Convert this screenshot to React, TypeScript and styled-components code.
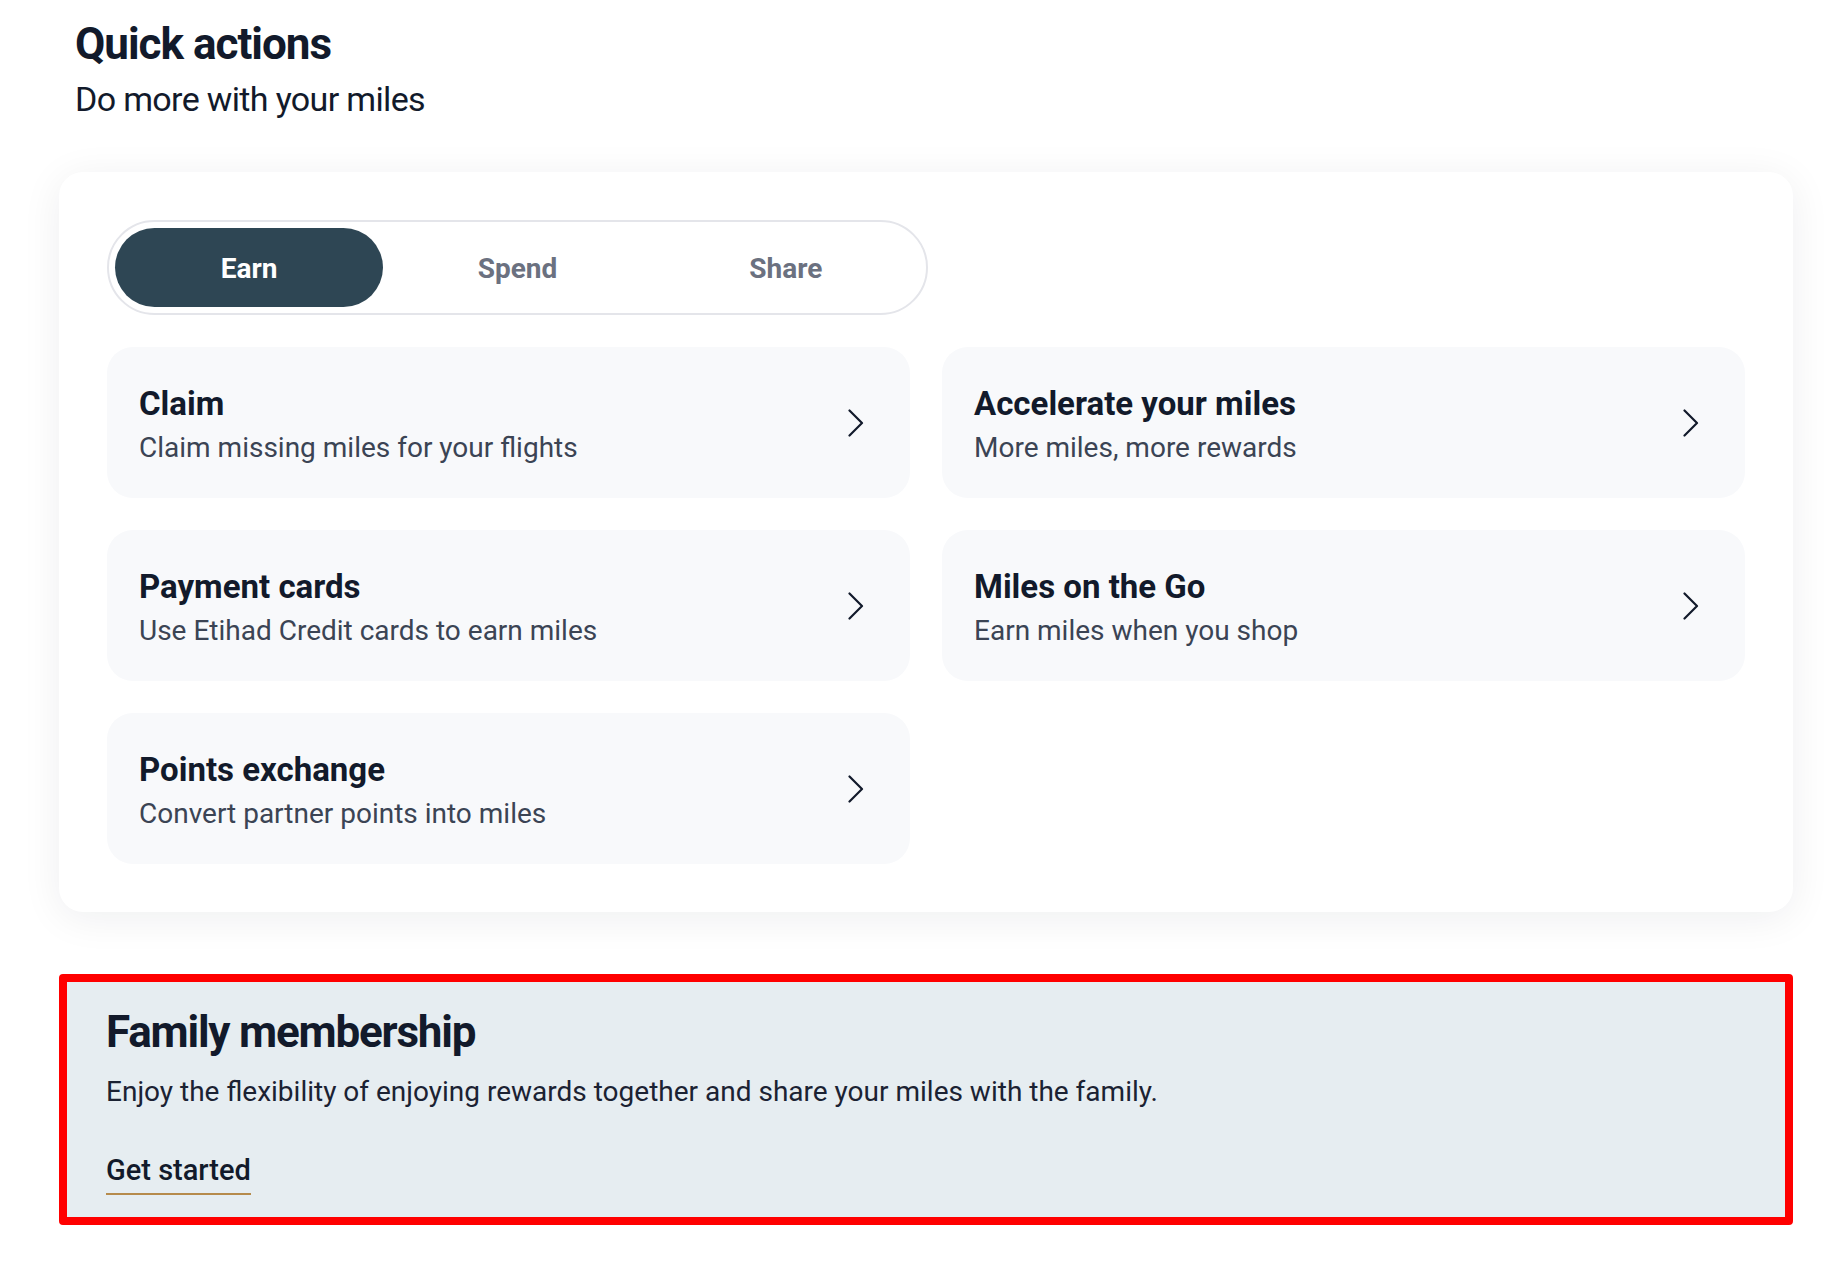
import { useState } from 'react';
import styled, { createGlobalStyle } from 'styled-components';

const GlobalStyle = createGlobalStyle`
  * { box-sizing: border-box; }
  body {
    margin: 0;
    background: #ffffff;
    font-family: Roboto, 'Liberation Sans', sans-serif;
    color: #121a2b;
  }
`;

const Page = styled.main`
  width: 1734px;
  margin-left: 59px;
  padding: 18px 0 56px;
`;

const Heading = styled.h1`
  margin: 0 0 0 16px;
  font-size: 44px;
  line-height: 52px;
  font-weight: 700;
  letter-spacing: -1px;
  color: #121a2b;
`;

const Subheading = styled.p`
  margin: 9px 0 0 16px;
  font-size: 34px;
  line-height: 40px;
  font-weight: 400;
  letter-spacing: -0.65px;
  color: #121a2b;
`;

const Card = styled.section`
  margin-top: 53px;
  padding: 48px;
  background: #ffffff;
  border-radius: 24px;
  box-shadow: 0 6px 40px rgba(20, 26, 43, 0.07);
`;

const TabBar = styled.div`
  display: grid;
  grid-template-columns: repeat(3, 1fr);
  width: 821px;
  padding: 6px;
  border: 2px solid #e4e5ea;
  border-radius: 999px;
`;

const Tab = styled.button<{ $active: boolean }>`
  height: 79px;
  border: 0;
  border-radius: 999px;
  background: ${({ $active }) => ($active ? '#2e4654' : 'transparent')};
  color: ${({ $active }) => ($active ? '#ffffff' : '#6b7180')};
  font-family: inherit;
  font-size: 28px;
  font-weight: 700;
  padding-top: 2px;
  cursor: pointer;
`;

const Grid = styled.div`
  display: grid;
  grid-template-columns: 1fr 1fr;
  gap: 32px;
  margin-top: 32px;
`;

const Tile = styled.a`
  display: flex;
  align-items: center;
  justify-content: space-between;
  height: 151px;
  padding: 0 46px 0 32px;
  background: #f8f9fb;
  border-radius: 26px;
  color: inherit;
  text-decoration: none;
  cursor: pointer;
`;

const TileText = styled.div`
  display: flex;
  flex-direction: column;
  gap: 6px;
  padding-top: 5px;
`;

const TileTitle = styled.span`
  font-size: 33px;
  line-height: 40px;
  font-weight: 700;
  color: #121a2b;
`;

const TileDesc = styled.span`
  font-size: 28px;
  line-height: 36px;
  color: #3b4454;
`;

const Family = styled.section`
  margin-top: 62px;
  padding: 24px 39px 22px;
  background: #e6edf1;
  border: 8px solid #ff0000;
  border-radius: 4px;
`;

const FamilyTitle = styled.h2`
  margin: 0;
  font-size: 44px;
  line-height: 52px;
  font-weight: 700;
  letter-spacing: -1.2px;
  color: #121a2b;
`;

const FamilyText = styled.p`
  margin: 16px 0 0;
  font-size: 28px;
  line-height: 36px;
  color: #1b2233;
`;

const Link = styled.a`
  display: inline-block;
  margin-top: 43px;
  padding-bottom: 6px;
  border-bottom: 2px solid #b68b4c;
  font-size: 29px;
  line-height: 34px;
  font-weight: 500;
  color: #121a2b;
  text-decoration: none;
  cursor: pointer;
`;

type TabKey = 'earn' | 'spend' | 'share';

const tabs: { key: TabKey; label: string }[] = [
  { key: 'earn', label: 'Earn' },
  { key: 'spend', label: 'Spend' },
  { key: 'share', label: 'Share' },
];

const actions: Record<TabKey, { title: string; desc: string }[]> = {
  earn: [
    { title: 'Claim', desc: 'Claim missing miles for your flights' },
    { title: 'Accelerate your miles', desc: 'More miles, more rewards' },
    { title: 'Payment cards', desc: 'Use Etihad Credit cards to earn miles' },
    { title: 'Miles on the Go', desc: 'Earn miles when you shop' },
    { title: 'Points exchange', desc: 'Convert partner points into miles' },
  ],
  spend: [
    { title: 'Book a reward flight', desc: 'Fly further with your miles' },
    { title: 'Upgrade', desc: 'Use miles to upgrade your cabin' },
  ],
  share: [
    { title: 'Transfer miles', desc: 'Send miles to friends and family' },
  ],
};

const Chevron = () => (
  <svg width="16" height="28" viewBox="0 0 16 28" fill="none">
    <path d="M1.5 1.5 14 14 1.5 26.5" stroke="#121a2b" strokeWidth="2.2" strokeLinecap="round" strokeLinejoin="round" />
  </svg>
);

export default function App() {
  const [active, setActive] = useState<TabKey>('earn');

  return (
    <>
      <GlobalStyle />
      <Page>
        <Heading>Quick actions</Heading>
        <Subheading>Do more with your miles</Subheading>

        <Card>
          <TabBar>
            {tabs.map((t) => (
              <Tab key={t.key} $active={active === t.key} onClick={() => setActive(t.key)}>
                {t.label}
              </Tab>
            ))}
          </TabBar>
          <Grid>
            {actions[active].map((a) => (
              <Tile key={a.title}>
                <TileText>
                  <TileTitle>{a.title}</TileTitle>
                  <TileDesc>{a.desc}</TileDesc>
                </TileText>
                <Chevron />
              </Tile>
            ))}
          </Grid>
        </Card>

        <Family>
          <FamilyTitle>Family membership</FamilyTitle>
          <FamilyText>
            Enjoy the flexibility of enjoying rewards together and share your miles with the family.
          </FamilyText>
          <Link>Get started</Link>
        </Family>
      </Page>
    </>
  );
}
